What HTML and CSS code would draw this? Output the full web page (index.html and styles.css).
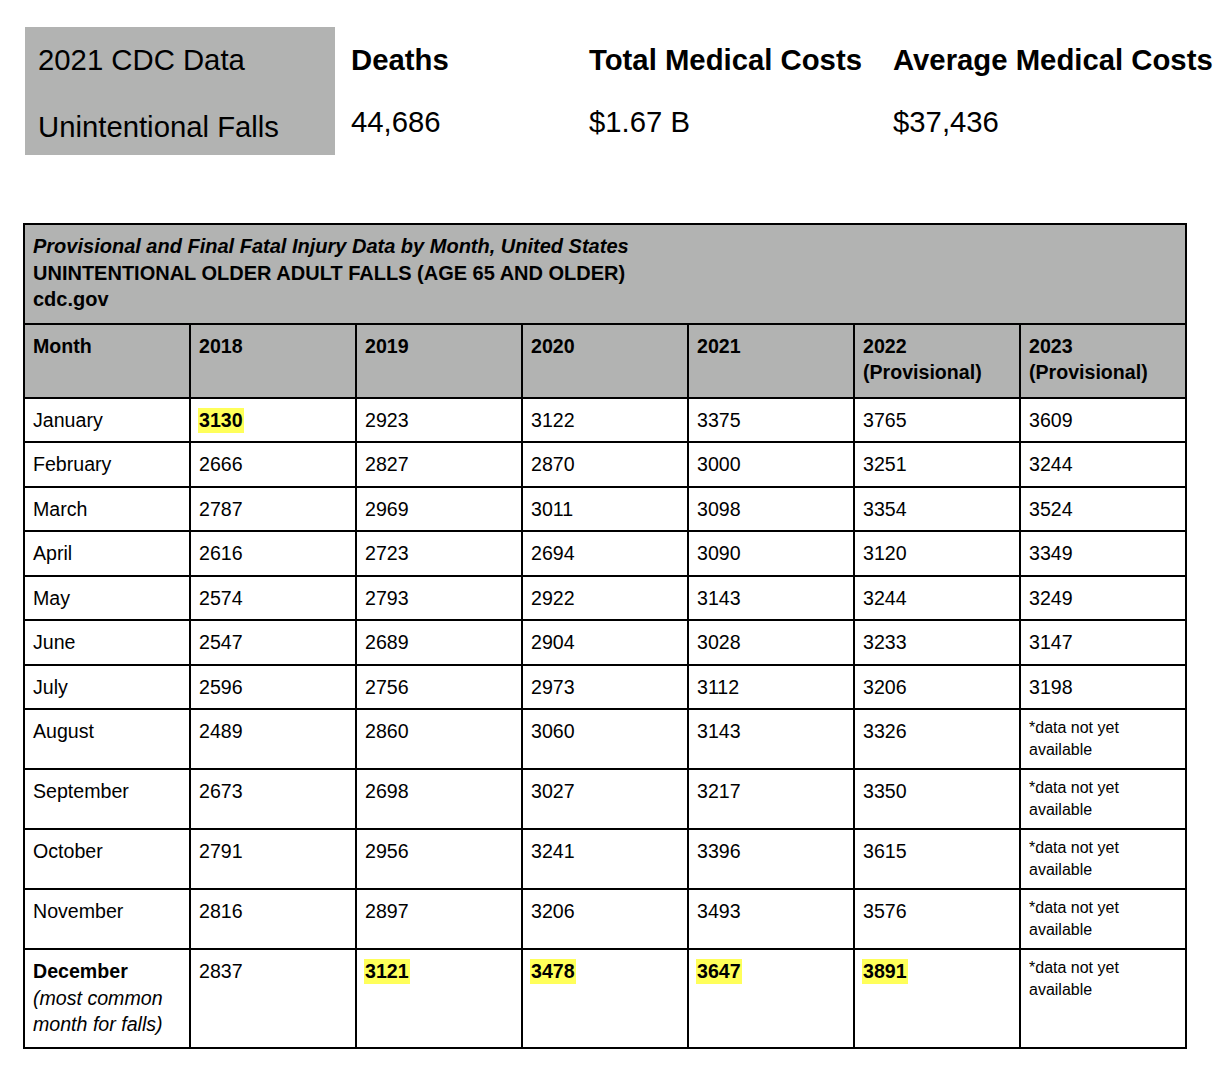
FILE: index.html
```html
<!DOCTYPE html>
<html>
<head>
<meta charset="utf-8">
<link rel="stylesheet" href="styles.css">
</head>
<body>
<section class="summary">
  <div class="sum-label">2021 CDC Data</div>
  <div class="sum-head">Deaths</div>
  <div class="sum-head">Total Medical Costs</div>
  <div class="sum-head">Average Medical Costs</div>
  <div class="sum-label sum-label-2">Unintentional Falls</div>
  <div class="sum-val">44,686</div>
  <div class="sum-val">$1.67 B</div>
  <div class="sum-val">$37,436</div>
</section>

<table class="data">
  <colgroup>
    <col><col><col><col><col><col><col>
  </colgroup>
  <thead>
    <tr class="title-row">
      <th colspan="7">
        <div class="t-italic">Provisional and Final Fatal Injury Data by Month, United States</div>
        <div>UNINTENTIONAL OLDER ADULT FALLS (AGE 65 AND OLDER)</div>
        <div>cdc.gov</div>
      </th>
    </tr>
    <tr class="head-row">
      <th>Month</th>
      <th>2018</th>
      <th>2019</th>
      <th>2020</th>
      <th>2021</th>
      <th>2022<br>(Provisional)</th>
      <th>2023<br>(Provisional)</th>
    </tr>
  </thead>
  <tbody>
    <tr><td>January</td><td><span class="hl">3130</span></td><td>2923</td><td>3122</td><td>3375</td><td>3765</td><td>3609</td></tr>
    <tr><td>February</td><td>2666</td><td>2827</td><td>2870</td><td>3000</td><td>3251</td><td>3244</td></tr>
    <tr><td>March</td><td>2787</td><td>2969</td><td>3011</td><td>3098</td><td>3354</td><td>3524</td></tr>
    <tr><td>April</td><td>2616</td><td>2723</td><td>2694</td><td>3090</td><td>3120</td><td>3349</td></tr>
    <tr><td>May</td><td>2574</td><td>2793</td><td>2922</td><td>3143</td><td>3244</td><td>3249</td></tr>
    <tr><td>June</td><td>2547</td><td>2689</td><td>2904</td><td>3028</td><td>3233</td><td>3147</td></tr>
    <tr><td>July</td><td>2596</td><td>2756</td><td>2973</td><td>3112</td><td>3206</td><td>3198</td></tr>
    <tr><td>August</td><td>2489</td><td>2860</td><td>3060</td><td>3143</td><td>3326</td><td class="na">*data not yet available</td></tr>
    <tr><td>September</td><td>2673</td><td>2698</td><td>3027</td><td>3217</td><td>3350</td><td class="na">*data not yet available</td></tr>
    <tr><td>October</td><td>2791</td><td>2956</td><td>3241</td><td>3396</td><td>3615</td><td class="na">*data not yet available</td></tr>
    <tr><td>November</td><td>2816</td><td>2897</td><td>3206</td><td>3493</td><td>3576</td><td class="na">*data not yet available</td></tr>
    <tr class="dec-row">
      <td><strong>December</strong><br><em>(most common month for falls)</em></td>
      <td>2837</td>
      <td><span class="hl">3121</span></td>
      <td><span class="hl">3478</span></td>
      <td><span class="hl">3647</span></td>
      <td><span class="hl">3891</span></td>
      <td class="na">*data not yet available</td>
    </tr>
  </tbody>
</table>
</body>
</html>
```

FILE: styles.css
```css
html, body {
  margin: 0;
  padding: 0;
  background: #ffffff;
}

body {
  font-family: "Liberation Sans", Arial, Helvetica, sans-serif;
  color: #000000;
}

/* ---------- summary block ---------- */
.summary {
  display: grid;
  grid-template-columns: 310px 238px 304px auto;
  grid-template-rows: 64px 64px;
  margin: 27px 0 0 25px;
  font-size: 29.3px;
  line-height: 34px;
}

.summary > div {
  display: flex;
  align-items: center;
  padding-left: 16px;
  padding-top: 2px;
  white-space: nowrap;
}

.summary > .sum-label {
  background: #b2b3b2;
  padding-left: 13px;
}

.summary > .sum-label-2 {
  padding-top: 7px;
}

.sum-head {
  font-weight: bold;
}

.summary > .sum-val {
  padding-top: 0;
  padding-bottom: 2px;
}

/* ---------- data table ---------- */
.data {
  margin: 68px 0 0 23px;
  width: 1164px;
  table-layout: fixed;
  border-collapse: collapse;
  border: 2px solid #000;
  font-size: 19.6px;
  line-height: 26.5px;
}

.data th,
.data td {
  border: 2px solid #000;
  padding: 8px 8px 8px 8px;
  text-align: left;
  vertical-align: top;
}

.title-row th {
  background: #b2b3b2;
  font-weight: bold;
  font-size: 20px;
  padding-bottom: 10px;
}

.t-italic {
  font-style: italic;
}

.head-row th {
  background: #b2b3b2;
  font-weight: bold;
  padding-bottom: 11px;
}

.hl {
  background: #ffff5a;
  font-weight: bold;
  padding: 1px 1px 2px 1px;
  margin-left: -1px;
}

.data td.na {
  font-size: 16px;
  line-height: 21.5px;
  padding-top: 7px;
}

.dec-row td {
  padding-bottom: 9px;
}

.dec-row em {
  font-style: italic;
}
```
